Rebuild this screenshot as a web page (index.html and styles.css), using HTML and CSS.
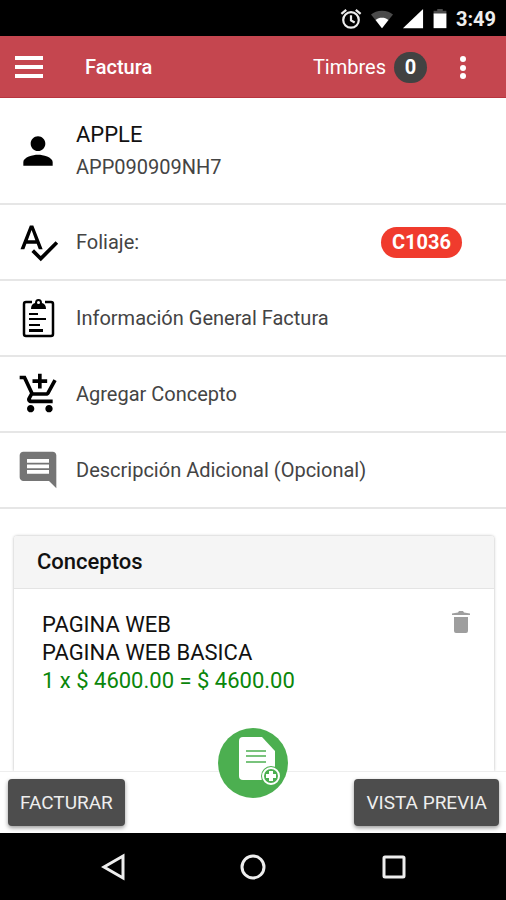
FILE: index.html
```html
<!DOCTYPE html>
<html lang="es">
<head>
  <meta charset="UTF-8">
  <meta name="viewport" content="width=device-width, initial-scale=1.0">
  <title>Factura</title>
  <link rel="stylesheet" href="styles.css">
</head>
<body>
  <div class="status-bar">
    <svg class="status-icon" viewBox="0 0 24 24" fill="none" stroke="#eee" stroke-width="2.400">
      <circle cx="12" cy="13" r="8.500"/>
      <path d="M12 8v5.500l4 2.300M1.500 6.500l5.300-4.500M22.500 6.500l-5.300-4.500"/>
    </svg>
    <svg class="status-icon wifi" viewBox="0 0 24 24">
      <path fill="#4a4a4a" d="M12 22L0 7C3 4.500 7 3 12 3s9 1.500 12 4z"/>
      <path fill="#fff" d="M12 22L5 13c2-1.600 4.500-2.300 7-2.300s5 .7 7 2.300z"/>
    </svg>
    <svg class="status-icon" viewBox="0 0 24 24">
      <path fill="#fff" d="M1 22L23 1v21z"/>
    </svg>
    <svg class="status-icon battery" viewBox="0 0 16 24">
      <path fill="#4a4a4a" d="M5 1h6v2h4v4H1V3h4z"/>
      <path fill="#fff" d="M1 6h14v16H1z"/>
    </svg>
    <span class="clock">3:49</span>
  </div>

  <header class="toolbar">
    <button type="button" class="icon-btn" aria-label="Menú">
      <svg width="28" height="22" viewBox="0 0 28 22" fill="#fff">
        <path d="M0 0h28v4H0zM0 9h28v4H0zM0 18h28v4H0z"/>
      </svg>
    </button>
    <h1>Factura</h1>
    <div class="stamps">Timbres <span class="count">0</span></div>
    <button type="button" class="icon-btn" aria-label="Más opciones">
      <svg width="8" height="24" viewBox="0 0 8 24" fill="#fff">
        <circle cx="4" cy="4" r="3"/>
        <circle cx="4" cy="13" r="3"/>
        <circle cx="4" cy="21" r="3"/>
      </svg>
    </button>
  </header>

  <main>
    <ul class="options">
      <li class="client">
        <svg class="icon" viewBox="0 0 24 24">
          <path d="M12 12c2.210 0 4-1.790 4-4s-1.790-4-4-4-4 1.790-4 4 1.790 4 4 4zm0 2c-2.670 0-8 1.340-8 4v2h16v-2c0-2.660-5.330-4-8-4z"/>
        </svg>
        <div>
          <h2>APPLE</h2>
          <p>APP090909NH7</p>
        </div>
      </li>
      <li>
        <svg class="icon" viewBox="0 0 24 24">
          <path d="M12.450 16h2.090L9.430 3H7.570L2.460 16h2.090l1.120-3h5.640l1.140 3zm-6.020-5L8.500 5.480 10.570 11H6.430zm15.160.59l-8.090 8.090L9.830 16l-1.410 1.410 5.090 5.090L23 13l-1.410-1.410z"/>
        </svg>
        <span>Foliaje:</span>
        <span class="folio">C1036</span>
      </li>
      <li>
        <svg class="icon" viewBox="0 0 44 44">
          <path fill="none" stroke="#000" stroke-width="2.500" d="M16 6H10Q8 6 8 8V38Q8 40 10 40H35Q37 40 37 38V8Q37 6 35 6H29"/>
          <path d="M15 13q0-5 4-6 0-4 3.500-4t3.500 4q4 1 4 6z"/>
          <circle cx="22.500" cy="6.500" r="1.500" fill="#fff"/>
          <path d="M13 17h9v2h-9zM13 22h17v2H13zM13 28h11v2H13zM13 33h14v3H13z"/>
        </svg>
        <span>Información General Factura</span>
      </li>
      <li>
        <svg class="icon" viewBox="-1 0 24 24">
          <path d="M11 9h2V6h3V4h-3V1h-2v3H8v2h3v3zm-4 9c-1.100 0-1.990.9-1.990 2S5.900 22 7 22s2-.9 2-2-.9-2-2-2zm10 0c-1.100 0-1.990.9-1.990 2s.89 2 1.990 2 2-.9 2-2-.9-2-2-2zm-9.830-3.250l.03-.12.9-1.630h7.450c.75 0 1.410-.41 1.750-1.030l3.860-7.010L19.420 4h-.01l-1.100 2-2.760 5H8.530l-.13-.27L6.160 6l-.95-2-.94-2H1v2h2l3.600 7.590-1.350 2.450c-.16.28-.25.61-.25.96 0 1.100.9 2 2 2h12v-2H7.420c-.13 0-.25-.11-.25-.25z"/>
        </svg>
        <span>Agregar Concepto</span>
      </li>
      <li>
        <svg class="icon muted" viewBox="0 0 24 24">
          <path d="M21.990 4c0-1.100-.89-2-1.990-2H4c-1.100 0-2 .9-2 2v12c0 1.100.9 2 2 2h14l4 4-.01-18zM18 14H6v-2h12v2zm0-3H6V9h12v2zm0-3H6V6h12v2z"/>
        </svg>
        <span>Descripción Adicional (Opcional)</span>
      </li>
    </ul>

    <section class="card">
      <h2 class="card-title">Conceptos</h2>
      <div class="concept">
        <div class="concept-info">
          <p>PAGINA WEB</p>
          <p>PAGINA WEB BASICA</p>
          <p class="amount">1 x $ 4600.00 = $ 4600.00</p>
        </div>
        <button type="button" class="icon-btn" aria-label="Eliminar">
          <svg width="18" height="22" viewBox="0 0 18 22" fill="#9e9e9e">
            <path d="M0 2.500L6 1.500 7 0h4l1 1.500 6 1V4H0zM2 6h14v14q0 2-2 2H4q-2 0-2-2z"/>
          </svg>
        </button>
      </div>
    </section>
  </main>

  <footer class="actions">
    <button type="button" class="btn">FACTURAR</button>
    <button type="button" class="fab" aria-label="Nuevo documento">
      <svg width="70" height="70" viewBox="0 0 70 70">
        <path fill="#fff" d="M25 9h19l13 14v25q0 4-4 4H25q-4 0-4-4V13q0-4 4-4z"/>
        <path stroke="#4caf50" stroke-opacity=".75" stroke-width="2" d="M28 23h20M28 28h20M28 34h20"/>
        <circle cx="53" cy="48" r="10" fill="#4caf50"/>
        <circle cx="53" cy="48" r="8" fill="none" stroke="#fff" stroke-width="2"/>
        <path stroke="#fff" stroke-width="4" d="M53 43v10M48 48h10"/>
      </svg>
    </button>
    <button type="button" class="btn">VISTA PREVIA</button>
  </footer>

  <nav class="system-nav">
    <button type="button" class="icon-btn" aria-label="Atrás">
      <svg width="28" height="28" viewBox="0 0 28 28"><path d="M25 3v22L6 14z"/></svg>
    </button>
    <button type="button" class="icon-btn" aria-label="Inicio">
      <svg width="28" height="28" viewBox="0 0 28 28"><circle cx="14" cy="14" r="11"/></svg>
    </button>
    <button type="button" class="icon-btn" aria-label="Recientes">
      <svg width="28" height="28" viewBox="0 0 28 28"><rect x="4" y="4" width="20" height="20" rx="1"/></svg>
    </button>
  </nav>
</body>
</html>
```
FILE: styles.css
```css
* {
  box-sizing: border-box;
}

body {
  margin: 0;
  min-height: 100vh;
  display: flex;
  flex-direction: column;
  background: #fff;
  color: #111;
  font-family: Roboto, sans-serif;
  font-size: 20px;
  line-height: 28px;
}

h1, h2, p, ul {
  margin: 0;
  padding: 0;
}

svg {
  display: block;
}

button {
  font-family: inherit;
  border: none;
  cursor: pointer;
}

.icon-btn {
  padding: 0;
  background: none;
}

.status-bar {
  height: 36px;
  padding: 2px 10px 0;
  display: flex;
  align-items: center;
  justify-content: flex-end;
  gap: 8px;
  background: #000;
  color: #eee;
}

.status-icon {
  width: 22px;
  height: 22px;
}

.status-icon.wifi {
  width: 24px;
}

.status-icon.battery {
  width: 16px;
}

.clock {
  font-weight: 700;
}

.toolbar {
  height: 62px;
  padding: 1px 39px 0 15px;
  display: flex;
  align-items: center;
  background: #c5464f;
  border-bottom: 1px solid #b8353f;
  color: #fff;
}

.toolbar h1 {
  flex: 1;
  margin-left: 42px;
  font-size: 20px;
  font-weight: 500;
}

.stamps {
  display: flex;
  align-items: center;
  gap: 8px;
  margin-right: 32px;
}

.count {
  width: 33px;
  border-radius: 16px;
  line-height: 31px;
  background: #424242;
  font-weight: 700;
  text-align: center;
}

main {
  flex: 1;
  display: flex;
  flex-direction: column;
}

.options {
  list-style: none;
}

.options li {
  height: 76px;
  padding: 0 44px 0 16px;
  display: flex;
  align-items: center;
  gap: 16px;
  border-bottom: 2px solid #e6e6e6;
  color: #444;
}

.options .client {
  height: 107px;
}

.client h2 {
  color: #111;
  font-size: 22px;
  font-weight: 400;
  line-height: 32px;
}

.client p {
  line-height: 32px;
}

.icon {
  width: 44px;
  height: 44px;
  flex: none;
  fill: #000;
}

.icon.muted {
  fill: #757575;
}

.folio {
  margin-left: auto;
  padding: 0 11px;
  border-radius: 16px;
  background: #f03b2d;
  color: #fff;
  font-weight: 700;
  line-height: 31px;
}

.card {
  flex: 1;
  margin: 27px 12px 0 14px;
  border-radius: 3px 3px 0 0;
  box-shadow: 0 0 3px rgba(0, 0, 0, 0.3);
}

.card-title {
  padding: 12px 23px;
  background: #f5f5f5;
  border-bottom: 1px solid #e4e4e4;
  border-radius: 3px 3px 0 0;
  font-size: 22px;
  font-weight: 500;
}

.concept {
  padding: 22px 24px 60px 28px;
  display: flex;
  align-items: flex-start;
  justify-content: space-between;
  font-size: 22px;
}

.amount {
  color: #0a860a;
}

.actions {
  position: sticky;
  bottom: 0;
  height: 62px;
  padding: 0 7px 0 8px;
  display: flex;
  align-items: center;
  justify-content: space-between;
  background: #fff;
  border-top: 1px solid #eee;
}

.btn {
  height: 47px;
  padding: 0 12px;
  border-radius: 4px;
  background: #4d4d4d;
  box-shadow: 0 2px 4px rgba(0, 0, 0, 0.4);
  color: #eee;
  font-size: 19px;
}

/* floats over the top edge of the footer */
.fab {
  position: absolute;
  left: 50%;
  bottom: 35px;
  width: 70px;
  height: 70px;
  margin-left: -35px;
  padding: 0;
  border-radius: 50%;
  background: #4caf50;
}

.system-nav {
  height: 67px;
  padding: 0 98px;
  display: flex;
  align-items: center;
  justify-content: space-between;
  background: #000;
}

.system-nav svg {
  fill: none;
  stroke: #eee;
  stroke-width: 3;
}
```
